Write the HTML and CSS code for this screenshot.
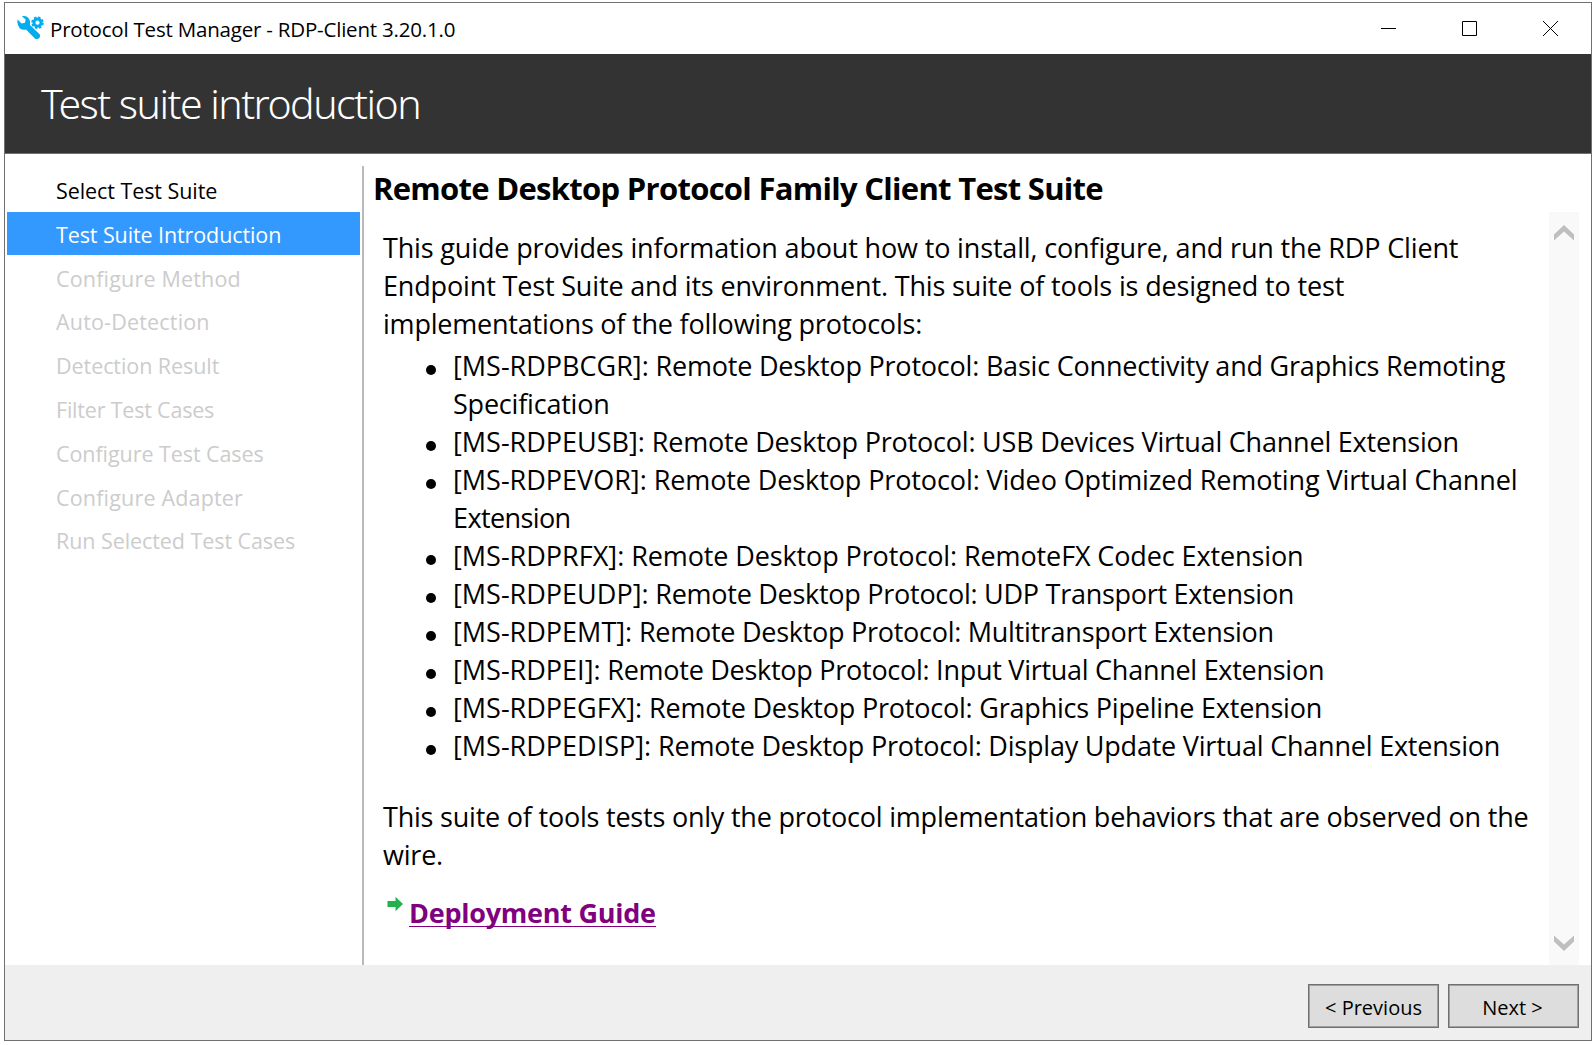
FILE: index.html
```
<!DOCTYPE html>
<html lang="en">
<head>
<meta charset="utf-8">
<title>Protocol Test Manager</title>
<link rel="stylesheet" href="styles.css">
</head>
<body>
<div class="window">
  <div class="titlebar">
    <svg class="app-icon" width="27" height="24" viewBox="0 0 27 24">
      <path fill="#00adef" d="M.6 3.6 4.6 7.4 8 6.8 8.6 3.4 5 .2C8.500-.8 12.600 1.400 13.100 5.600L13 9 22.600 18.300Q23.800 20.300 22 22.200 20 23.800 17.900 22.600L9 13.500Q5.600 14.200 2.900 12.400-.4 9 .6 3.600Z"/>
      <circle cx="20.500" cy="6.700" r="3.600" fill="none" stroke="#00adef" stroke-width="3"/>
      <circle cx="20.500" cy="6.700" r="5.200" fill="none" stroke="#00adef" stroke-width="2.200" stroke-dasharray="2.300 1.784"/>
    </svg>
    <span class="title">Protocol Test Manager - RDP-Client 3.20.1.0</span>
    <div class="controls">
      <svg width="15" height="15" viewBox="0 0 15 15"><path d="M0 7.500H15"/></svg>
      <svg width="15" height="15" viewBox="0 0 15 15"><path d="M.5.5H14.500V14.500H.5Z"/></svg>
      <svg width="15" height="15" viewBox="0 0 15 15"><path d="M0 0 15 15M15 0 0 15"/></svg>
    </div>
  </div>
  <header class="banner"><h1>Test suite introduction</h1></header>
  <main class="main">
    <ul class="steps">
      <li class="done">Select Test Suite</li>
      <li class="current">Test Suite Introduction</li>
      <li class="loose">Configure Method</li>
      <li class="loose">Auto-Detection</li>
      <li>Detection Result</li>
      <li class="close">Filter Test Cases</li>
      <li>Configure Test Cases</li>
      <li class="loose">Configure Adapter</li>
      <li>Run Selected Test Cases</li>
    </ul>
    <section class="content">
      <h2>Remote Desktop Protocol Family Client Test Suite</h2>
      <div class="viewer">
        <div class="doc">
          <p class="intro">This guide provides information about how to install, configure, and run the RDP Client<br>Endpoint Test Suite and its environment. This suite of tools is designed to test<br><span class="tight">implementations of the following protocols:</span></p>
          <ul class="protocols">
            <li><b>[MS-RDPBCGR]:</b> Remote Desktop Protocol: Basic Connectivity and Graphics Remoting<br>Specification</li>
            <li><b>[MS-RDPEUSB]:</b> Remote Desktop Protocol: USB Devices Virtual Channel Extension</li>
            <li class="wide"><b>[MS-RDPEVOR]:</b> Remote Desktop Protocol: Video Optimized Remoting Virtual Channel<br><span class="narrow">Extension</span></li>
            <li class="wide"><b>[MS-RDPRFX]:</b> Remote Desktop Protocol: RemoteFX Codec Extension</li>
            <li class="tight"><b>[MS-RDPEUDP]:</b> Remote Desktop Protocol: UDP Transport Extension</li>
            <li class="tight"><b>[MS-RDPEMT]:</b> Remote Desktop Protocol: Multitransport Extension</li>
            <li class="tight"><b>[MS-RDPEI]:</b> Remote Desktop Protocol: Input Virtual Channel Extension</li>
            <li><b>[MS-RDPEGFX]:</b> Remote Desktop Protocol: Graphics Pipeline Extension</li>
            <li><b>[MS-RDPEDISP]:</b> Remote Desktop Protocol: Display Update Virtual Channel Extension</li>
          </ul>
          <p class="tight">This suite of tools tests only the protocol implementation behaviors that are observed on the<br>wire.</p>
          <div class="guide">
            <svg width="17" height="16" viewBox="0 0 17 16"><path fill="#22b14c" d="M.5 5H8.500V.8L16 8 8.500 15.200V11H.5Z"/></svg>
            <a>Deployment Guide</a>
          </div>
        </div>
        <div class="scrollbar">
          <svg width="20" height="16" viewBox="0 0 20 16"><path d="M0 9.500 10 0 20 9.500V15.500L10 6.500 0 15.500Z"/></svg>
          <svg width="20" height="16" viewBox="0 0 20 16"><path d="M0 6.500 10 16 20 6.500V.5L10 9.500 0 .5Z"/></svg>
        </div>
      </div>
    </section>
  </main>
  <footer class="footer">
    <button>&lt; Previous</button>
    <button class="next">Next &gt;</button>
  </footer>
</div>
</body>
</html>
```
FILE: styles.css
```
* { box-sizing: border-box; }
body {
  margin: 0;
  height: 1045px;
  padding: 2px 4px 4px;
  background: #fff;
  color: #000;
  font-family: "Open Sans", "Noto Sans", sans-serif;
  overflow: hidden;
}
h1, h2, p, ul { margin: 0; padding: 0; }
ul { list-style: none; }
svg { display: block; flex: none; }
.window {
  width: 1588px;
  height: 1039px;
  border: 1px solid #707070;
  display: flex;
  flex-direction: column;
}
.titlebar {
  height: 51px;
  flex: none;
  display: flex;
  padding: 0 33px 0 12px;
}
.app-icon { margin-top: 13px; }
.title {
  margin-left: 6px;
  font-size: 20.500px;
  line-height: 28px;
  letter-spacing: -0.200px;
  margin-top: 12px;
  white-space: nowrap;
}
.controls {
  margin: 18px 0 0 auto;
  display: flex;
  gap: 66px;
}
.controls path { fill: none; stroke: #000; stroke-width: 1; }
.banner {
  height: 100px;
  flex: none;
  background: #333;
  border-bottom: 1px solid #707070;
  padding-left: 36px;
}
.banner h1 {
  font: 300 41px/99px "Noto Sans", sans-serif;
  letter-spacing: -1.510px;
  color: #fff;
  white-space: nowrap;
}
.main { flex: 1; min-height: 0; display: flex; }
.steps {
  width: 359px;
  margin-top: 12px;
  padding: 2px 2px 0;
  flex: none;
  border-right: 2px solid #b9b9bd;
  font-size: 21.500px;
  letter-spacing: -0.070px;
  color: #ccc;
}
.steps li {
  height: 43px;
  margin-bottom: 0.800px;
  padding-left: 49px;
  line-height: 46px;
  white-space: nowrap;
}
.steps .done { color: #000; }
.steps .current { background: #39f; color: #fff; letter-spacing: -0.100px; }
.steps .loose { letter-spacing: 0.180px; }
.steps .close { letter-spacing: -0.200px; }
.content { flex: 1; display: flex; flex-direction: column; padding: 0 12px 0 9px; }
h2 {
  height: 58px;
  flex: none;
  font-size: 31px;
  line-height: 68px;
  letter-spacing: -0.710px;
  white-space: nowrap;
}
.viewer { flex: 1; display: flex; justify-content: space-between; }
.doc {
  padding: 17px 0 0 10px;
  font-size: 27px;
  line-height: 38px;
  letter-spacing: -0.210px;
  white-space: nowrap;
}
.intro { letter-spacing: -0.155px; }
.protocols { margin: 4px 0 33px; padding-left: 70px; }
.protocols li { position: relative; }
.protocols b { font-weight: 400; letter-spacing: 0; }
.protocols li::before {
  content: "";
  position: absolute;
  left: -27px;
  top: 18px;
  width: 10px;
  height: 10px;
  border-radius: 50%;
  background: #000;
}
.doc .tight { letter-spacing: -0.215px; }
.doc li.tight { letter-spacing: -0.270px; }
.doc .wide { letter-spacing: -0.110px; }
.doc .narrow { letter-spacing: -0.600px; }
.guide { display: flex; margin-top: 20px; padding-left: 4px; }
.guide svg { margin-top: 2px; }
.guide a {
  margin-left: 5px;
  color: purple;
  font-weight: 700;
  letter-spacing: -0.260px;
  height: 33px;
  border-bottom: 1px solid purple;
}
.scrollbar {
  width: 30px;
  background: #f9f9f9;
  display: flex;
  flex-direction: column;
  justify-content: space-between;
  align-items: center;
  padding: 13px 0 14px;
}
.scrollbar path { fill: #bfbfbf; }
.footer {
  height: 75px;
  flex: none;
  background: #efefef;
  display: flex;
  justify-content: flex-end;
  gap: 9px;
  padding: 19px 12px 0;
}
.footer button {
  width: 131px;
  height: 44px;
  padding: 3px 0 0;
  border: 1px solid #707070;
  box-shadow: inset 0 0 0 1px #a0a0a0;
  border-radius: 0;
  background: #ddd;
  color: #000;
  font: 20px "Open Sans", sans-serif;
}
.footer .next { padding-right: 2px; }
```
